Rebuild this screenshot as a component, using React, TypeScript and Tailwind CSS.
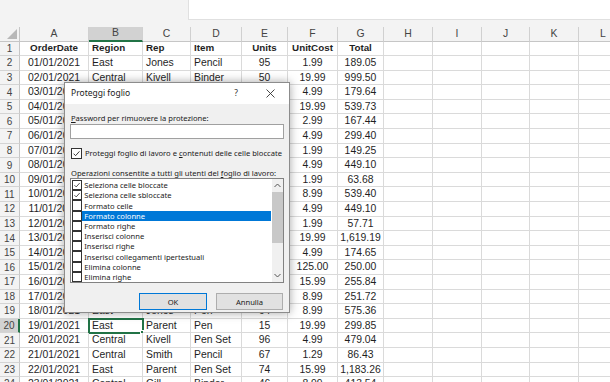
import React from "react";

// column widths (px) for A..L
const columns = [
  { key: "A", w: "w-[69px]", align: "justify-center" },
  { key: "B", w: "w-[54px]", align: "justify-start pl-[3px]" },
  { key: "C", w: "w-[48px]", align: "justify-start pl-[3px]" },
  { key: "D", w: "w-[51px]", align: "justify-start pl-[3px]" },
  { key: "E", w: "w-[46px]", align: "justify-center" },
  { key: "F", w: "w-[50px]", align: "justify-center" },
  { key: "G", w: "w-[46px]", align: "justify-center" },
  { key: "H", w: "w-[49px]", align: "justify-center" },
  { key: "I", w: "w-[49px]", align: "justify-center" },
  { key: "J", w: "w-[48px]", align: "justify-center" },
  { key: "K", w: "w-[49px]", align: "justify-center" },
  { key: "L", w: "w-[49px]", align: "justify-center" },
];

const header = ["OrderDate", "Region", "Rep", "Item", "Units", "UnitCost", "Total"];

const data = [
  ["01/01/2021", "East", "Jones", "Pencil", "95", "1.99", "189.05"],
  ["02/01/2021", "Central", "Kivell", "Binder", "50", "19.99", "999.50"],
  ["03/01/2021", "Central", "Jardine", "Pencil", "36", "4.99", "179.64"],
  ["04/01/2021", "Central", "Gill", "Pen", "27", "19.99", "539.73"],
  ["05/01/2021", "West", "Sorvino", "Pencil", "56", "2.99", "167.44"],
  ["06/01/2021", "East", "Jones", "Binder", "60", "4.99", "299.40"],
  ["07/01/2021", "Central", "Andrews", "Pencil", "75", "1.99", "149.25"],
  ["08/01/2021", "Central", "Jardine", "Pencil", "90", "4.99", "449.10"],
  ["09/01/2021", "West", "Thompson", "Pencil", "32", "1.99", "63.68"],
  ["10/01/2021", "East", "Jones", "Binder", "60", "8.99", "539.40"],
  ["11/01/2021", "Central", "Morgan", "Pencil", "90", "4.99", "449.10"],
  ["12/01/2021", "East", "Howard", "Binder", "29", "1.99", "57.71"],
  ["13/01/2021", "East", "Parent", "Binder", "81", "19.99", "1,619.19"],
  ["14/01/2021", "East", "Jones", "Pencil", "35", "4.99", "174.65"],
  ["15/01/2021", "Central", "Smith", "Desk", "2", "125.00", "250.00"],
  ["16/01/2021", "East", "Jones", "Pen Set", "16", "15.99", "255.84"],
  ["17/01/2021", "Central", "Morgan", "Binder", "28", "8.99", "251.72"],
  ["18/01/2021", "East", "Jones", "Pen", "64", "8.99", "575.36"],
  ["19/01/2021", "East", "Parent", "Pen", "15", "19.99", "299.85"],
  ["20/01/2021", "Central", "Kivell", "Pen Set", "96", "4.99", "479.04"],
  ["21/01/2021", "Central", "Smith", "Pencil", "67", "1.29", "86.43"],
  ["22/01/2021", "East", "Parent", "Pen Set", "74", "15.99", "1,183.26"],
  ["23/01/2021", "Central", "Gill", "Binder", "46", "8.99", "413.54"],
];

const options = [
  { label: "Seleziona celle bloccate", checked: true },
  { label: "Seleziona celle sbloccate", checked: true },
  { label: "Formato celle", checked: false },
  { label: "Formato colonne", checked: false, selected: true },
  { label: "Formato righe", checked: false },
  { label: "Inserisci colonne", checked: false },
  { label: "Inserisci righe", checked: false },
  { label: "Inserisci collegamenti ipertestuali", checked: false },
  { label: "Elimina colonne", checked: false },
  { label: "Elimina righe", checked: false },
];

const Check = ({ size = 10 }: { size?: number }) => (
  <svg width={size} height={size} viewBox="0 0 10 10">
    <polyline points="1.8,5.2 4,7.4 8.3,2.6" fill="none" stroke="#222" strokeWidth="1" />
  </svg>
);

function Row({ n, cells, bold }: { n: number; cells: string[]; bold?: boolean }) {
  const selectedRow = n === 20;
  // rows 4..18 sit fully under the dialog for columns B..E
  const hidden = n >= 4 && n <= 18;
  return (
    <div className="flex h-[14.6px] shrink-0">
      <div
        className={`w-[20px] shrink-0 flex items-center justify-center border-b border-[#d4d4d4] text-[10px] text-[#444] ${
          selectedRow ? "bg-[#d2d2d2] border-r-2 border-r-[#217346]" : "bg-[#f3f3f3] border-r border-r-[#c6c6c6]"
        }`}
      >
        {n}
      </div>
      {columns.map((c, i) => {
        const sel = selectedRow && c.key === "B";
        const text = hidden && i >= 1 && i <= 4 ? "" : cells[i] ?? "";
        return (
          <div
            key={c.key}
            className={`${c.w} ${c.align} shrink-0 relative flex items-center border-r border-b border-[#dadada] whitespace-nowrap ${
              bold ? "font-bold text-[9.8px]" : "text-[10.4px]"
            } ${sel ? "outline-2 outline-[#217346] -outline-offset-1" : ""}`}
          >
            {text}
            {sel && <span className="absolute -right-[2px] -bottom-[2px] w-[4px] h-[4px] bg-[#217346] border border-white" />}
          </div>
        );
      })}
    </div>
  );
}

export default function App() {
  return (
    <div className="relative w-[610px] h-[382px] overflow-hidden bg-white text-[#1f1f1f] font-['Liberation_Sans',Arial,sans-serif]">
      {/* formula bar area */}
      <div className="flex h-[27px] bg-[#f3f3f3]">
        <div className="w-[188px]" />
        <div className="flex-1 h-[20px] bg-white border-l border-b border-[#e0e0e0]" />
      </div>

      {/* column headers */}
      <div className="flex h-[14.5px] bg-[#f3f3f3]">
        <div className="w-[20px] shrink-0 relative border-r border-b border-[#c6c6c6]">
          <svg className="absolute right-[2px] bottom-[2px]" width="10" height="10" viewBox="0 0 10 10">
            <polygon points="10,0 10,10 0,10" fill="#b8b8b8" />
          </svg>
        </div>
        {columns.map((c) => (
          <div
            key={c.key}
            className={`${c.w} shrink-0 flex items-center justify-center text-[10.4px] text-[#444] border-r border-[#d0d0d0] ${
              c.key === "B" ? "bg-[#d2d2d2] border-b-2 border-b-[#217346]" : "border-b border-b-[#c6c6c6]"
            }`}
          >
            {c.key}
          </div>
        ))}
      </div>

      <Row n={1} cells={header} bold />
      {data.map((r, i) => (
        <Row key={i} n={i + 2} cells={r} />
      ))}

      {/* dialog */}
      <div className="absolute left-[64px] top-[82px] w-[226px] h-[231px] flex flex-col bg-[#f0f0f0] border border-[#8c8c8c] shadow-[0_0_9px_rgba(0,0,0,0.35)] text-[#1a1a1a] font-['Noto_Sans',sans-serif]">
        <div className="h-[21px] flex items-center pl-[6px] bg-white text-[8.5px]">
          <span className="flex-1">Proteggi foglio</span>
          <span className="w-[14px] text-center text-[#333]">?</span>
          <span className="w-[20px]" />
          <span className="w-[14px] flex justify-center">
            <svg width="9" height="9" viewBox="0 0 9 9">
              <path d="M0.5 0.5 L8.5 8.5 M8.5 0.5 L0.5 8.5" stroke="#333" strokeWidth="0.9" />
            </svg>
          </span>
          <span className="w-[12px]" />
        </div>

        <div className="flex flex-col px-[5px] text-[7.6px] leading-[10px]">
          <div className="mt-[9px] h-[10px] pl-[1px]">
            <span className="underline">P</span>assword per rimuovere la protezione:
          </div>
          <div className="mt-[1px] h-[15px] bg-white border border-[#a0a0a0]" />

          <div className="mt-[8px] h-[12px] flex items-center gap-[3px] pl-[1px]">
            <span className="w-[11px] h-[11px] border border-[#333] bg-white flex items-center justify-center">
              <Check size={9} />
            </span>
            <span>
              Proteggi foglio di lavoro e <span className="underline">c</span>ontenuti delle celle bloccate
            </span>
          </div>

          <div className="mt-[9px] h-[10px] pl-[1px]">
            Operazioni consentite a tutti gli utenti del <span className="underline">f</span>oglio di lavoro:
          </div>

          <div className="h-[105px] flex bg-white border border-[#828282]">
            <div className="flex-1 flex flex-col pt-[1px] pl-[1px]">
              {options.map((o) => (
                <div key={o.label} className="h-[10.3px] flex items-stretch">
                  <span className="w-[10.3px] shrink-0 border border-[#333] flex items-center justify-center">
                    {o.checked && <Check size={8} />}
                  </span>
                  <span
                    className={`flex-1 flex items-center pl-[2px] whitespace-nowrap ${
                      o.selected ? "bg-[#0078d7] text-white" : ""
                    }`}
                  >
                    {o.label}
                  </span>
                </div>
              ))}
            </div>
            <div className="w-[11px] ml-[1px] flex flex-col bg-[#f0f0f0]">
              <div className="h-[13px] flex items-center justify-center">
                <svg width="7" height="5" viewBox="0 0 7 5">
                  <polyline points="0.5,4 3.5,1 6.5,4" fill="none" stroke="#555" strokeWidth="1" />
                </svg>
              </div>
              <div className="h-[51px] bg-[#c8c8c8]" />
              <div className="flex-1" />
              <div className="h-[13px] flex items-center justify-center">
                <svg width="7" height="5" viewBox="0 0 7 5">
                  <polyline points="0.5,1 3.5,4 6.5,1" fill="none" stroke="#555" strokeWidth="1" />
                </svg>
              </div>
            </div>
          </div>

          <div className="mt-[10px] flex justify-end gap-[9px] pr-[1px]">
            <button className="w-[68px] h-[17px] bg-[#e1e1e1] border border-[#0078d7] text-[7.6px]">OK</button>
            <button className="w-[67px] h-[17px] bg-[#e1e1e1] border border-[#adadad] text-[7.6px]">Annulla</button>
          </div>
        </div>
      </div>
    </div>
  );
}
